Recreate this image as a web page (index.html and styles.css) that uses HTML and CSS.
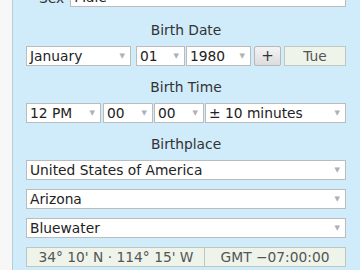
FILE: index.html
```html
<!DOCTYPE html>
<html lang="en">
  <head>
    <meta charset="UTF-8" />
    <meta name="viewport" content="width=device-width, initial-scale=1.0" />
    <title>Birth data</title>
    <link rel="stylesheet" href="styles.css">
  </head>
  <body>
    <div class="panel">
      <div class="row sex-row">
        <span class="inline-label">Sex</span>
        <div class="field grow"><span>Male</span><span class="arrow">▼</span></div>
      </div>

      <div class="label first">Birth Date</div>
      <div class="row">
        <div class="field month"><span>January</span><span class="arrow">▼</span></div>
        <div class="field day"><span>01</span><span class="arrow">▼</span></div>
        <div class="field year"><span>1980</span><span class="arrow">▼</span></div>
        <button class="plus-button">+</button>
        <div class="info weekday">Tue</div>
      </div>

      <div class="label">Birth Time</div>
      <div class="row">
        <div class="field hour"><span>12 PM</span><span class="arrow">▼</span></div>
        <div class="field minute"><span>00</span><span class="arrow">▼</span></div>
        <div class="field minute"><span>00</span><span class="arrow">▼</span></div>
        <div class="field grow"><span>± 10 minutes</span><span class="arrow">▼</span></div>
      </div>

      <div class="label place">Birthplace</div>
      <div class="stack">
        <div class="field"><span>United States of America</span><span class="arrow">▼</span></div>
        <div class="field"><span>Arizona</span><span class="arrow">▼</span></div>
        <div class="field"><span>Bluewater</span><span class="arrow">▼</span></div>
        <div class="row">
          <div class="info coords">34° 10' N · 114° 15' W</div>
          <div class="info zone">GMT −07:00:00</div>
        </div>
      </div>
    </div>
  </body>
</html>
```

FILE: styles.css
```css
body {
  margin: 0;
  background-color: #f7f7f7;
  font-family: "DejaVu Sans", Verdana, sans-serif;
  font-size: 13.8px;
  color: #222;
  height: 270px;
  overflow: hidden;
}

.panel {
  margin: -13px 0 0 12px;
  width: 320px;
  height: 300px;
  padding: 0 14px 0 13px;
  background-color: #d0ebf9;
  border-left: 1px solid #b9cbd5;
  border-right: 1px solid #b9cbd5;
}

.row {
  display: flex;
  gap: 4px;
}

.sex-row {
  gap: 6px;
  padding-left: 13px;
  align-items: flex-end;
}

.inline-label {
  color: #333;
  line-height: 17px;
}

.label {
  text-align: center;
  color: #333;
  padding: 13px 0 7px;
  line-height: 17px;
}

.label.first {
  padding-top: 15px;
  padding-bottom: 7px;
}

.label.place {
  padding-top: 13px;
  padding-bottom: 7px;
}

.field {
  height: 20px;
  box-sizing: border-box;
  background-color: #fff;
  border: 1px solid #bcbcbc;
  display: flex;
  align-items: center;
  justify-content: space-between;
  padding: 0 5px 0 3px;
  white-space: nowrap;
}

.grow {
  flex: 1;
}

.arrow {
  font-size: 7px;
  color: #b0b0b0;
}

.month {
  width: 105px;
}

.day {
  width: 49px;
  margin-left: 1px;
}

.year {
  width: 65px;
  margin-left: -3px;
  margin-right: -1px;
}

.hour {
  width: 75px;
  margin-right: -2px;
}

.minute {
  width: 50px;
  margin-right: -3px;
}

.plus-button {
  width: 27px;
  height: 20px;
  padding: 0;
  font-family: "DejaVu Sans", Verdana, sans-serif;
  font-size: 15px;
  color: #333;
  border: 1px solid #b8b8b8;
  border-radius: 2px;
  background: linear-gradient(#f4f4f4, #dcdcdc);
}

.info {
  height: 20px;
  box-sizing: border-box;
  border: 1px solid #bfc8bd;
  background-color: #eef4ea;
  color: #555;
  display: flex;
  align-items: center;
  justify-content: center;
  white-space: nowrap;
}

.weekday {
  flex: 1;
  margin-left: -1px;
}

.stack {
  display: flex;
  flex-direction: column;
  gap: 9px;
}

.coords {
  width: 180px;
}

.zone {
  flex: 1;
  margin-left: -6px;
}
```
